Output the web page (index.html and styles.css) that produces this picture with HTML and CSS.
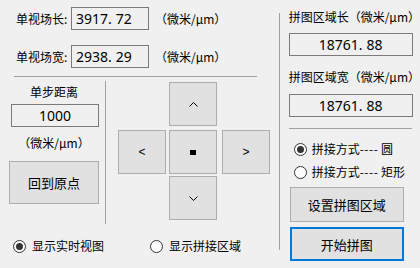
FILE: index.html
```html
<!DOCTYPE html>
<html>
<head>
<meta charset="utf-8">
<link rel="stylesheet" href="styles.css">
</head>
<body>
<div class="app">
  <div class="left">
    <div class="field-row">
      <span class="label">单视场长:</span>
      <span class="tbox">3917<span class="dot">.</span>72</span>
      <span class="unit">（微米/μm）</span>
    </div>
    <div class="field-row second">
      <span class="label">单视场宽:</span>
      <span class="tbox">2938<span class="dot">.</span>29</span>
      <span class="unit">（微米/μm）</span>
    </div>
    <div class="hr"></div>
    <div class="mid">
      <div class="step">
        <div class="step-title">单步距离</div>
        <div class="tbox center step-box">1000</div>
        <div class="step-unit">（微米/μm）</div>
        <div class="btn home">回到原点</div>
      </div>
      <div class="vline"></div>
      <div class="dpad">
        <div class="btn pad up"><svg width="9" height="5" viewBox="0 0 9 5"><polyline points="0.5,4.5 4.5,0.5 8.5,4.5" fill="none" stroke="#000" stroke-width="1"/></svg></div>
        <div class="btn pad lft">&lt;</div>
        <div class="btn pad ctr"><span class="sq"></span></div>
        <div class="btn pad rgt">&gt;</div>
        <div class="btn pad dn"><svg width="9" height="5" viewBox="0 0 9 5"><polyline points="0.5,0.5 4.5,4.5 8.5,0.5" fill="none" stroke="#000" stroke-width="1"/></svg></div>
      </div>
    </div>
    <div class="bottom">
      <div class="radio first"><span class="circle on"></span><span>显示实时视图</span></div>
      <div class="radio"><span class="circle"></span><span>显示拼接区域</span></div>
    </div>
  </div>
  <div class="right">
    <div class="rline"></div>
    <div class="rcontent">
      <div class="rlabel">拼图区域长（微米/μm）</div>
      <div class="tbox wide center">18761<span class="dot">.</span>88</div>
      <div class="rlabel l2">拼图区域宽（微米/μm）</div>
      <div class="tbox wide center t2">18761<span class="dot">.</span>88</div>
      <div class="rhr"></div>
      <div class="radio r1"><span class="circle on"></span><span>拼接方式<span class="dash">----</span>&nbsp;圆</span></div>
      <div class="radio r2"><span class="circle"></span><span>拼接方式<span class="dash">----</span>&nbsp;矩形</span></div>
      <div class="btn big b1">设置拼图区域</div>
      <div class="btn big b2">开始拼图</div>
    </div>
  </div>
</div>
</body>
</html>
```
FILE: styles.css
```css
html, body {
  margin: 0;
  padding: 0;
  background: #f0f0f0;
}
body {
  font-family: "Noto Sans CJK SC", "Noto Sans", sans-serif;
  font-size: 12px;
  color: #000;
  width: 420px;
  height: 268px;
  overflow: hidden;
}
.app {
  display: flex;
  height: 268px;
}
.left {
  width: 280px;
  display: flex;
  flex-direction: column;
}
.field-row {
  display: flex;
  align-items: center;
  margin-top: 7px;
  height: 23px;
}
.field-row.second {
  margin-top: 15px;
}
.label {
  margin-left: 16px;
  width: 55px;
  line-height: 16px;
}
.tbox {
  box-sizing: border-box;
  width: 78px;
  height: 23px;
  border: 1px solid #7a7a7a;
  background: #f0f0f0;
  font-family: "Noto Sans", "Liberation Sans", sans-serif;
  font-size: 14px;
  line-height: 21px;
  padding-left: 4px;
  color: #000;
  white-space: nowrap;
}
.tbox.center {
  text-align: center;
  padding-left: 0;
}
.dot {
  padding-right: 4px;
}
.unit {
  margin-left: 6px;
  line-height: 16px;
}
.hr {
  margin-top: 8px;
  margin-left: 14px;
  width: 243px;
  height: 1px;
  background: #a0a0a0;
}
.mid {
  display: flex;
  margin-top: 4px;
}
.step {
  margin-left: 9px;
  width: 90px;
  display: flex;
  flex-direction: column;
  align-items: center;
}
.step-title {
  margin-top: 3px;
  line-height: 16px;
}
.step-box {
  margin-top: 4px;
  margin-left: 2px;
  width: 88px;
}
.step-unit {
  margin-top: 8px;
  line-height: 16px;
}
.btn {
  box-sizing: border-box;
  background: #e1e1e1;
  border: 1px solid #adadad;
  display: flex;
  align-items: center;
  justify-content: center;
}
.home {
  margin-top: 10px;
  width: 90px;
  height: 43px;
  font-size: 13px;
}
.vline {
  margin-left: 6px;
  width: 1px;
  height: 143px;
  background: #a0a0a0;
}
.dpad {
  margin-left: 12px;
  margin-top: 1px;
  display: grid;
  grid-template-columns: 48px 48px 48px;
  grid-template-rows: 44px 44px 44px;
  column-gap: 3px;
  row-gap: 3px;
  height: 139px;
}
.pad {
  width: 48px;
  height: 44px;
  font-family: "Liberation Sans", sans-serif;
  font-size: 12px;
}
.up { grid-column: 2; grid-row: 1; }
.lft { grid-column: 1; grid-row: 2; margin-top: 1px; }
.ctr { grid-column: 2; grid-row: 2; margin-top: 1px; }
.rgt { grid-column: 3; grid-row: 2; margin-top: 1px; margin-left: 2px; }
.dn { grid-column: 2; grid-row: 3; }
.pad svg { display: block; }
.sq {
  display: block;
  width: 6px;
  height: 5px;
  background: #000;
}
.bottom {
  display: flex;
  margin-top: 14px;
}
.radio {
  display: flex;
  align-items: center;
  line-height: 16px;
  height: 16px;
  font-size: 12px;
  white-space: nowrap;
}
.radio.first {
  margin-left: 13px;
  width: 137px;
}
.circle {
  box-sizing: border-box;
  width: 13px;
  height: 13px;
  border: 1px solid #333;
  border-radius: 50%;
  background: #fff;
  margin-right: 6px;
  display: flex;
  align-items: center;
  justify-content: center;
  flex: none;
}
.circle.on::after {
  content: "";
  width: 7px;
  height: 7px;
  border-radius: 50%;
  background: #333;
}
.dash {
  letter-spacing: 0.5px;
}
.right {
  display: flex;
}
.rline {
  margin-top: 13px;
  width: 1px;
  height: 237px;
  background: #a0a0a0;
}
.rcontent {
  margin-left: 9px;
  display: flex;
  flex-direction: column;
}
.rlabel {
  margin-top: 9px;
  line-height: 16px;
  white-space: nowrap;
}
.rlabel.l2 {
  margin-top: 13px;
}
.tbox.wide {
  margin-top: 8px;
  width: 124px;
}
.tbox.t2 {
  margin-top: 9px;
}
.rhr {
  margin-top: 11px;
  width: 123px;
  height: 1px;
  background: #a0a0a0;
}
.radio.r1 {
  margin-top: 12px;
  margin-left: 5px;
}
.radio.r2 {
  margin-top: 7px;
  margin-left: 5px;
}
.radio.r1 .circle, .radio.r2 .circle {
  margin-right: 5px;
}
.big {
  margin-left: 1px;
  width: 114px;
  font-size: 13px;
}
.b1 {
  margin-top: 7px;
  height: 35px;
}
.b2 {
  margin-top: 5px;
  height: 34px;
  border: 2px solid #0078d7;
}
```
